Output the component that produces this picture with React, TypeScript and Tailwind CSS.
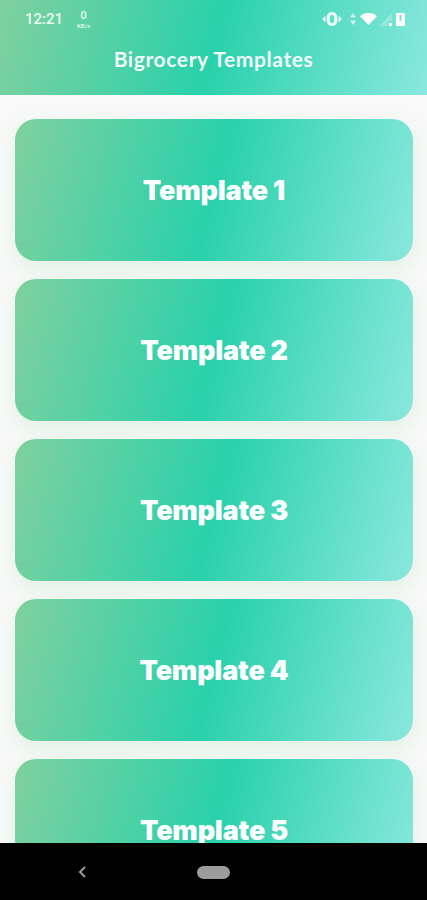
const GRADIENT = "bg-[linear-gradient(104deg,#80d09f_0%,#29d1ab_50%,#8ae8de_100%)]";

function Card({ label }: { label: string }) {
  return (
    <div className={`h-[142px] shrink-0 rounded-[21px] ${GRADIENT} shadow-[0_8px_22px_rgba(130,210,150,0.2)] flex items-center justify-center pt-[1px]`}>
      <span className="text-white text-[27px] leading-none font-black font-['Inter',sans-serif] tracking-[-0.2px]">{label}</span>
    </div>
  );
}

function StatusIcons() {
  return (
    <div className="flex items-center text-white">
      <svg width="22" height="16" viewBox="0 0 22 16" fill="white" opacity="0.85">
        <path d="M11 1C14.500 1 16.500 3.500 16.500 8S14.500 15 11 15 5.500 12.500 5.500 8 7.500 1 11 1zM11 4C9.500 4 8.800 5.500 8.800 8S9.500 12 11 12 13.200 10.500 13.200 8 12.500 4 11 4z" fillRule="evenodd" />
        <path d="M4.500 4.500v7L1 8zM17.500 4.500v7L21 8z" />
      </svg>
      <svg width="8" height="12" viewBox="0 0 8 12" fill="white" opacity="0.7" className="ml-[6px]">
        <path d="M4 0l3 4.500H1zM4 12L1 7.500h6z" />
      </svg>
      <svg width="17" height="12" viewBox="0 0 17 12" fill="white" className="ml-[3px]">
        <path d="M0 3.200C2.200 1.200 5.200 0 8.500 0S14.800 1.200 17 3.200L8.500 12z" />
      </svg>
      <svg width="14" height="13" viewBox="0 0 14 13" className="ml-[2px]">
        <path d="M13 0v8H9v5H0z" fill="white" opacity="0.25" />
        <rect x="10" y="10" width="3" height="3" fill="white" />
      </svg>
      <svg width="9" height="14" viewBox="0 0 9 14" className="ml-[3px]">
        <path d="M0 1h9v13H0z M3.500 3v6h2V3z" fill="white" fillRule="evenodd" />
      </svg>
    </div>
  );
}

export default function App() {
  return (
    <div className="w-[427px] h-[900px] flex flex-col overflow-hidden bg-[#f8f9f8] font-['Lato',sans-serif]">
      <header className={`h-[95px] shrink-0 ${GRADIENT} flex flex-col`}>
        <div className="h-[38px] shrink-0 flex items-center justify-between pl-[25px] pr-[22px]">
          <div className="flex items-center gap-[14px]">
            <span className="text-white/85 text-[15px] font-['Roboto',sans-serif] font-medium">12:21</span>
            <div className="flex flex-col items-center text-white/85 font-['Roboto',sans-serif] font-medium">
              <span className="text-[11px] leading-[13px]">0</span>
              <span className="text-[6px] leading-[7px]">KB/s</span>
            </div>
          </div>
          <StatusIcons />
        </div>
        <div className="flex-1 flex items-start justify-center">
          <h1 className="text-white/95 text-[21px] leading-[24px] mt-[9px] font-bold tracking-[0.6px]">Bigrocery Templates</h1>
        </div>
      </header>
      <main className="flex-1 min-h-0 overflow-hidden flex flex-col gap-[18px] pt-[24px] pl-[15px] pr-[14px]">
        <Card label="Template 1" />
        <Card label="Template 2" />
        <Card label="Template 3" />
        <Card label="Template 4" />
        <Card label="Template 5" />
      </main>
      <nav className="h-[57px] shrink-0 bg-black flex items-center justify-center relative">
        <svg className="absolute left-[77px] top-[22px]" width="10" height="14" viewBox="0 0 10 14" fill="none" stroke="#9a9a9a" strokeWidth="2">
          <path d="M8 2L3 7l5 5" />
        </svg>
        <div className="w-[33px] h-[13px] rounded-full bg-[#9c9c9c] mb-[-2px]" />
      </nav>
    </div>
  );
}
